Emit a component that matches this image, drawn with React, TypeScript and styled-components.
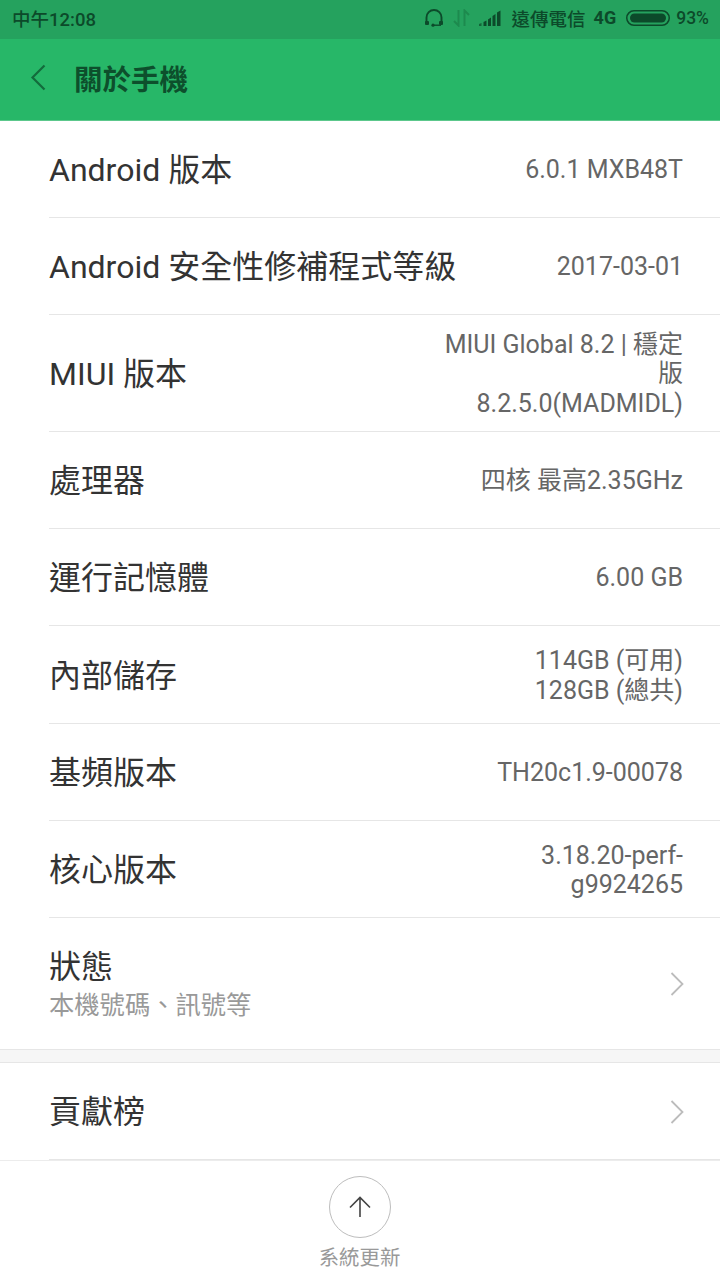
import { createGlobalStyle, styled } from 'styled-components';
import type { ReactNode } from 'react';

const FONT = `Roboto, "Noto Sans CJK TC", sans-serif`;

const GlobalStyle = createGlobalStyle`
  html, body {
    margin: 0;
    padding: 0;
    background: #ffffff;
    font-family: ${FONT};
  }
`;

const Page = styled.div`
  width: 720px;
  height: 1280px;
  overflow: hidden;
  display: flex;
  flex-direction: column;
  background: #ffffff;
`;

const StatusBar = styled.div`
  height: 39px;
  flex: none;
  background: #25a25e;
  color: #0c4a2a;
  display: flex;
  align-items: center;
  justify-content: space-between;
  padding: 0 11px 4px 12px;
  box-sizing: border-box;
  font-size: 18.5px;
  font-weight: 500;
`;

const StatusRight = styled.div`
  display: flex;
  align-items: center;
`;

const Carrier = styled.span`
  margin-left: 11px;
  margin-right: 8px;
`;

const NetworkType = styled.span`
  font-size: 18px;
  font-weight: 700;
`;

const BatteryLevel = styled.span`
  font-size: 17.5px;
`;

const Header = styled.header`
  height: 82px;
  flex: none;
  box-sizing: border-box;
  background: #27b768;
  border-bottom: 1px solid #5cc88c;
  display: flex;
  align-items: center;
  padding-left: 30px;
  padding-bottom: 5px;
  color: #0d4f2c;
`;

const Title = styled.h1`
  margin: 0 0 0 28px;
  font-size: 28.5px;
  font-weight: 700;
`;

const Row = styled.div<{ $h: number; $top?: number; $last?: boolean }>`
  height: ${(p) => p.$h}px;
  flex: none;
  box-sizing: border-box;
  margin-left: 49px;
  padding-right: 37px;
  padding-top: ${(p) => p.$top ?? 2}px;
  display: flex;
  align-items: center;
  justify-content: space-between;
  border-bottom: ${(p) => (p.$last ? 'none' : '1px solid #e6e6e6')};
`;

const LabelBox = styled.div`
  display: flex;
  flex-direction: column;
  gap: 3px;
`;

const Label = styled.div`
  font-size: 32px;
  line-height: 40px;
  color: #333333;
  white-space: nowrap;
`;

const Sub = styled.div`
  font-size: 25.3px;
  line-height: 32px;
  color: #999999;
  white-space: nowrap;
`;

const Value = styled.div<{ $w?: number }>`
  font-size: 25px;
  line-height: 29.5px;
  color: #666666;
  text-align: right;
  ${(p) => (p.$w ? `width: ${p.$w}px;` : 'white-space: nowrap;')}
`;

const ChevronSlot = styled.div`
  display: flex;
  margin-right: -1px;
`;

const Gap = styled.div`
  height: 14px;
  flex: none;
  box-sizing: border-box;
  background: #f6f6f6;
  border-top: 1px solid #e6e6e6;
  border-bottom: 1px solid #e6e6e6;
`;

const Footer = styled.footer`
  flex: 1;
  box-sizing: border-box;
  border-top: 1px solid #ececec;
  display: flex;
  flex-direction: column;
  align-items: center;
  padding: 15px 1px 0 0;
`;

const UpdateButton = styled.div`
  width: 62px;
  height: 62px;
  box-sizing: border-box;
  border-radius: 50%;
  border: 1px solid #bdbdbd;
  display: flex;
  align-items: center;
  justify-content: center;
`;

const UpdateLabel = styled.div`
  font-size: 20.4px;
  line-height: 28px;
  margin-top: 6px;
  color: #999999;
`;

const Chevron = () => (
  <svg width="14" height="26" viewBox="0 0 14 26" fill="none" stroke="#bcbcbc" strokeWidth="1.8">
    <path d="M1.5 2l11 11-11 11" />
  </svg>
);

const Back = () => (
  <svg width="16" height="27" viewBox="0 0 16 27" fill="none" stroke="#136b3c" strokeWidth="2.2">
    <path d="M14.5 1.5L2.5 13.5l12 12" />
  </svg>
);

const Headset = () => (
  <svg width="20" height="19" viewBox="0 0 20 19" fill="none" stroke="#0c4a2a" strokeWidth="1.9">
    <path d="M2.5 14V9.5a7.5 7.5 0 0 1 15 0V14" />
    <rect x="1" y="13" width="4" height="4" rx="1" fill="#0c4a2a" stroke="none" />
    <rect x="15" y="13" width="4" height="4" rx="1" fill="#0c4a2a" stroke="none" />
    <path d="M9 17.2h8" strokeWidth="1.4" />
    <circle cx="9" cy="17.2" r="1.6" fill="#0c4a2a" stroke="none" />
  </svg>
);

const DataArrows = () => (
  <svg width="17" height="18" viewBox="0 0 17 18" fill="none" stroke="#1d8a4e" strokeWidth="2" style={{ marginLeft: 9 }}>
    <path d="M5.5 1v15.5L1 12M11.5 17V1.5L16 6" />
  </svg>
);

const Signal = () => (
  <svg width="22" height="16" viewBox="0 0 22 16" fill="#0c4a2a" style={{ marginLeft: 9 }}>
    <polygon points="0,16 0,14 2.5,13 2.5,16" opacity="0.7" />
    <polygon points="4.5,16 4.5,12 7.5,10.5 7.5,16" />
    <polygon points="9,16 9,9.5 12,7.5 12,16" />
    <polygon points="13.5,16 13.5,6 16.5,4 16.5,16" />
    <polygon points="18,16 18,2.5 21.5,0.5 21.5,16" />
  </svg>
);

const Battery = () => (
  <svg width="44" height="16" viewBox="0 0 44 16" style={{ margin: '0 6px 0 10px' }}>
    <rect x="0.75" y="0.75" width="42.5" height="14.5" rx="7.25" fill="none" stroke="#0c4a2a" strokeWidth="1.5" />
    <rect x="4" y="3.5" width="36" height="9" rx="4.5" fill="#0c4a2a" />
  </svg>
);

const ArrowUp = () => (
  <svg width="24" height="24" viewBox="0 0 24 24" fill="none" stroke="#444444" strokeWidth="1.6">
    <path d="M12 22V2.5M2 12.5L12 2.5l10 10" />
  </svg>
);

const info: { label: string; h: number; w?: number; value: ReactNode }[] = [
  { label: 'Android 版本', h: 97, value: '6.0.1 MXB48T' },
  { label: 'Android 安全性修補程式等級', h: 97, value: '2017-03-01' },
  {
    label: 'MIUI 版本',
    h: 117,
    w: 250,
    value: (
      <>
        MIUI Global 8.2 | 穩定版
        <br />
        8.2.5.0(MADMIDL)
      </>
    ),
  },
  { label: '處理器', h: 97, value: '四核 最高2.35GHz' },
  { label: '運行記憶體', h: 97, value: '6.00 GB' },
  {
    label: '內部儲存',
    h: 98,
    value: (
      <>
        114GB (可用)
        <br />
        128GB (總共)
      </>
    ),
  },
  { label: '基頻版本', h: 97, value: 'TH20c1.9-00078' },
  {
    label: '核心版本',
    h: 97,
    value: (
      <>
        3.18.20-perf-
        <br />
        g9924265
      </>
    ),
  },
];

export default function App() {
  return (
    <Page>
      <GlobalStyle />
      <StatusBar>
        <span>中午12:08</span>
        <StatusRight>
          <Headset />
          <DataArrows />
          <Signal />
          <Carrier>遠傳電信</Carrier>
          <NetworkType>4G</NetworkType>
          <Battery />
          <BatteryLevel>93%</BatteryLevel>
        </StatusRight>
      </StatusBar>
      <Header>
        <Back />
        <Title>關於手機</Title>
      </Header>
      {info.map((row) => (
        <Row key={row.label} $h={row.h}>
          <Label>{row.label}</Label>
          <Value $w={row.w}>{row.value}</Value>
        </Row>
      ))}
      <Row $h={131} $top={1} $last>
        <LabelBox>
          <Label>狀態</Label>
          <Sub>本機號碼、訊號等</Sub>
        </LabelBox>
        <ChevronSlot>
          <Chevron />
        </ChevronSlot>
      </Row>
      <Gap />
      <Row $h={97} $top={1}>
        <Label>貢獻榜</Label>
        <ChevronSlot>
          <Chevron />
        </ChevronSlot>
      </Row>
      <Footer>
        <UpdateButton>
          <ArrowUp />
        </UpdateButton>
        <UpdateLabel>系統更新</UpdateLabel>
      </Footer>
    </Page>
  );
}
